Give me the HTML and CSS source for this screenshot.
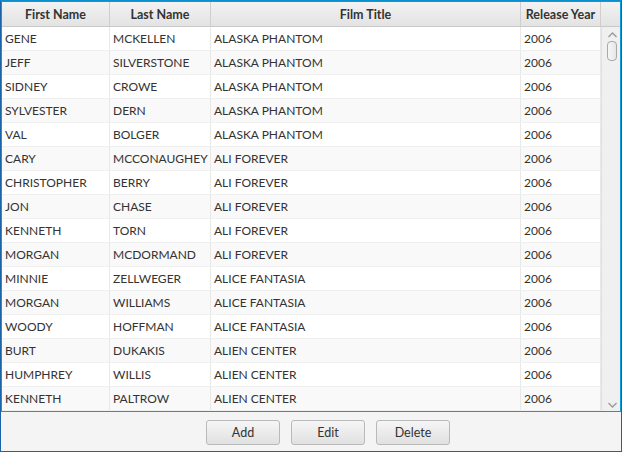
FILE: index.html
```html
<!DOCTYPE html>
<html>
<head>
<meta charset="utf-8">
<link rel="stylesheet" href="styles.css">
</head>
<body>
<div class="window">
  <div class="table">
    <div class="header">
      <div class="hcell c1">First Name</div>
      <div class="hcell c2">Last Name</div>
      <div class="hcell c3">Film Title</div>
      <div class="hcell c4">Release Year</div>
      <div class="hcell c5"></div>
    </div>
    <div class="body">
      <div class="rows">
        <div class="row"><div class="cell">GENE</div><div class="cell">MCKELLEN</div><div class="cell">ALASKA PHANTOM</div><div class="cell">2006</div></div>
        <div class="row"><div class="cell">JEFF</div><div class="cell">SILVERSTONE</div><div class="cell">ALASKA PHANTOM</div><div class="cell">2006</div></div>
        <div class="row"><div class="cell">SIDNEY</div><div class="cell">CROWE</div><div class="cell">ALASKA PHANTOM</div><div class="cell">2006</div></div>
        <div class="row"><div class="cell">SYLVESTER</div><div class="cell">DERN</div><div class="cell">ALASKA PHANTOM</div><div class="cell">2006</div></div>
        <div class="row"><div class="cell">VAL</div><div class="cell">BOLGER</div><div class="cell">ALASKA PHANTOM</div><div class="cell">2006</div></div>
        <div class="row"><div class="cell">CARY</div><div class="cell">MCCONAUGHEY</div><div class="cell">ALI FOREVER</div><div class="cell">2006</div></div>
        <div class="row"><div class="cell">CHRISTOPHER</div><div class="cell">BERRY</div><div class="cell">ALI FOREVER</div><div class="cell">2006</div></div>
        <div class="row"><div class="cell">JON</div><div class="cell">CHASE</div><div class="cell">ALI FOREVER</div><div class="cell">2006</div></div>
        <div class="row"><div class="cell">KENNETH</div><div class="cell">TORN</div><div class="cell">ALI FOREVER</div><div class="cell">2006</div></div>
        <div class="row"><div class="cell">MORGAN</div><div class="cell">MCDORMAND</div><div class="cell">ALI FOREVER</div><div class="cell">2006</div></div>
        <div class="row"><div class="cell">MINNIE</div><div class="cell">ZELLWEGER</div><div class="cell">ALICE FANTASIA</div><div class="cell">2006</div></div>
        <div class="row"><div class="cell">MORGAN</div><div class="cell">WILLIAMS</div><div class="cell">ALICE FANTASIA</div><div class="cell">2006</div></div>
        <div class="row"><div class="cell">WOODY</div><div class="cell">HOFFMAN</div><div class="cell">ALICE FANTASIA</div><div class="cell">2006</div></div>
        <div class="row"><div class="cell">BURT</div><div class="cell">DUKAKIS</div><div class="cell">ALIEN CENTER</div><div class="cell">2006</div></div>
        <div class="row"><div class="cell">HUMPHREY</div><div class="cell">WILLIS</div><div class="cell">ALIEN CENTER</div><div class="cell">2006</div></div>
        <div class="row"><div class="cell">KENNETH</div><div class="cell">PALTROW</div><div class="cell">ALIEN CENTER</div><div class="cell">2006</div></div>
      </div>
      <div class="scrollbar">
        <svg class="arrow" width="9" height="6" viewBox="0 0 9 6"><path d="M0.5 5 L4.5 1 L8.5 5" fill="none" stroke="#9a9a9a" stroke-width="1.4"/></svg>
        <div class="thumb"></div>
        <div class="track"></div>
        <svg class="arrow" width="9" height="6" viewBox="0 0 9 6"><path d="M0.5 1 L4.5 5 L8.5 1" fill="none" stroke="#9a9a9a" stroke-width="1.4"/></svg>
      </div>
    </div>
  </div>
  <div class="buttons">
    <button class="btn">Add</button>
    <button class="btn">Edit</button>
    <button class="btn">Delete</button>
  </div>
</div>
</body>
</html>
```
FILE: styles.css
```css
html, body {
  margin: 0;
  padding: 0;
}
body {
  width: 622px;
  height: 452px;
  background: #f4f4f4;
  font-family: "Lato", "Open Sans", sans-serif;
  font-size: 12px;
  color: #333;
}
.window {
  box-sizing: border-box;
  width: 622px;
  height: 452px;
  border: 1px solid #1b64a8;
  border-top-color: #0a8fcf;
  background: #f4f4f4;
  display: flex;
  flex-direction: column;
}
.table {
  box-sizing: border-box;
  height: 411px;
  border: 1px solid #0a9ad6;
  background: #fff;
  display: flex;
  flex-direction: column;
  overflow: hidden;
}
.header {
  display: grid;
  grid-template-columns: 108px 101px 310px 80px 1fr;
  height: 25px;
  box-sizing: border-box;
  flex: none;
  background: linear-gradient(#f2f2f2, #e3e3e3);
  border-bottom: 1px solid #c9c9c9;
}
.hcell {
  display: flex;
  align-items: center;
  justify-content: center;
  font-weight: bold;
  font-size: 12.5px;
  color: #333;
  border-right: 1px solid #cfcfcf;
  box-sizing: border-box;
}
.hcell.c5 { border-right: none; }
.body {
  flex: 1;
  display: flex;
  overflow: hidden;
}
.rows {
  width: 599px;
  flex: none;
}
.row {
  display: grid;
  grid-template-columns: 108px 101px 310px 80px;
  height: 24px;
  box-sizing: border-box;
  border-bottom: 1px solid #f0f0f0;
  background: #fff;
}
.row:nth-child(even) {
  background: #f9f9f9;
}
.cell {
  display: flex;
  align-items: center;
  padding-left: 3px;
  box-sizing: border-box;
  border-right: 1px solid #e8e8e8;
  white-space: nowrap;
  overflow: hidden;
}
.scrollbar {
  flex: 1;
  display: flex;
  flex-direction: column;
  align-items: center;
  background: #f0f0f0;
  border-left: 1px solid #e0e0e0;
  padding: 5px 0 3px 2px;
  box-sizing: border-box;
}
.arrow {
  flex: none;
}
.thumb {
  margin-top: 3px;
  width: 10px;
  height: 20px;
  box-sizing: border-box;
  border: 1px solid #a9a9a9;
  border-radius: 4px;
  background: linear-gradient(90deg, #f6f6f6, #e6e6e6);
  flex: none;
}
.track {
  flex: 1;
}
.buttons {
  flex: 1;
  display: flex;
  align-items: center;
  gap: 11px;
  padding-left: 205px;
  padding-top: 1px;
}
.btn {
  width: 74px;
  height: 25px;
  font-family: "Lato", "Open Sans", sans-serif;
  font-size: 12.5px;
  color: #333;
  border: 1px solid #b9b9b9;
  border-radius: 3px;
  background: linear-gradient(#f6f6f6, #e0e0e0);
  padding: 0;
}
```
